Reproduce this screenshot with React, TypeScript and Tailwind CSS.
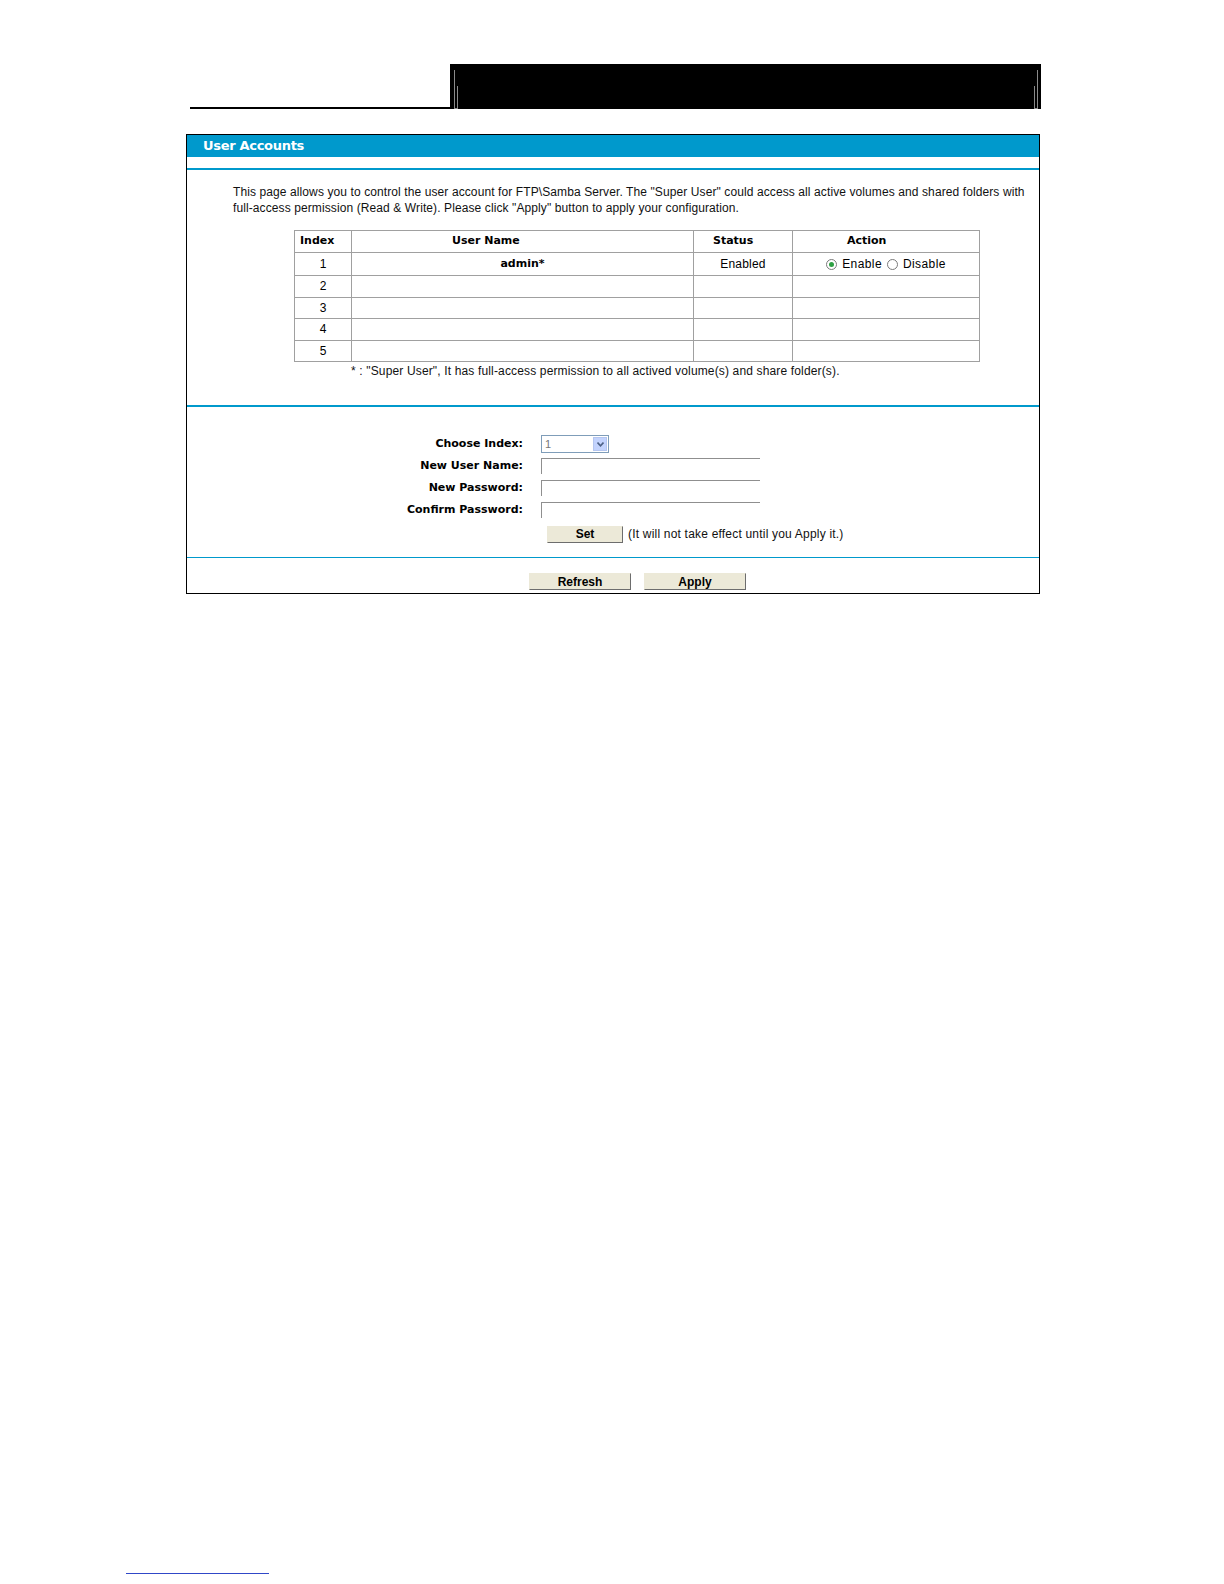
const ROWS = [
  { index: 1, name: "admin*", status: "Enabled", action: true },
  { index: 2, name: "", status: "", action: false },
  { index: 3, name: "", status: "", action: false },
  { index: 4, name: "", status: "", action: false },
  { index: 5, name: "", status: "", action: false },
];

function Radio({ checked }: { checked: boolean }) {
  return (
    <span className="inline-flex w-[11px] h-[11px] rounded-full border border-[#7a7a7a] bg-white items-center justify-center">
      {checked && <span className="w-[5px] h-[5px] rounded-full bg-[#2ea043]" />}
    </span>
  );
}

function FormButton({ label, className }: { label: string; className: string }) {
  return (
    <button
      className={
        "h-[17px] bg-[#ece9d8] border border-[#ece9d8] border-r-[#6d6d6d] border-b-[#6d6d6d] text-[12px] font-bold text-black leading-none " +
        className
      }
    >
      {label}
    </button>
  );
}

function TextField() {
  return <div className="w-[219px] h-[16px] border-t border-l border-[#8f8f8f] bg-white" />;
}

const th = "border border-[#a0a0a0] text-left font-bold text-[11px] font-['DejaVu_Sans',Verdana,sans-serif]";
const label = "h-[22px] flex items-center justify-end font-bold font-['DejaVu_Sans',Verdana,sans-serif]";

export default function App() {
  return (
    <div className="min-h-[1584px] bg-white font-['Liberation_Sans',Arial,sans-serif] text-black">
      {/* page header */}
      <div className="flex items-end pt-[64px] pl-[190px]">
        <div className="w-[260px] h-[45px] border-b-2 border-black" />
        <div className="w-[591px] h-[45px] bg-black">
          <svg width="591" height="45" viewBox="0 0 591 45">
            <path d="M4.5 6 V44 M7.5 22 V44 M4 44.5 H8" stroke="#8a8a8a" strokeWidth="1" fill="none" />
            <path d="M587.5 6 V44 M584.5 22 V44 M584 44.5 H588" stroke="#8a8a8a" strokeWidth="1" fill="none" />
          </svg>
        </div>
      </div>

      {/* User Accounts panel */}
      <div className="ml-[186px] mt-[25px] w-[854px] border border-black">
        <div className="h-[22px] bg-[#0099cc] flex items-center pl-[16px]">
          <span className="text-white text-[13px] font-bold font-['DejaVu_Sans',Verdana,sans-serif] tracking-[-0.3px]">
            User Accounts
          </span>
        </div>
        <div className="h-[11px]" />
        <div className="h-[2px] bg-[#0099cc]" />

        <div className="pt-[14px] pb-[26px]">
          <p className="pl-[46px] pr-[14px] text-[12px] leading-[16px] tracking-[0.1px] text-[#111]">
            This page allows you to control the user account for FTP\Samba Server. The "Super User" could access all active volumes and shared folders with full-access permission (Read &amp; Write). Please click "Apply" button to apply your configuration.
          </p>

          <table className="ml-[107px] mt-[14px] w-[686px] border-collapse text-[12px]">
            <thead>
              <tr className="h-[22px]">
                <th className={th + " w-[57px] pl-[5px]"}>Index</th>
                <th className={th + " w-[342px] pl-[100px]"}>User Name</th>
                <th className={th + " w-[99px] pl-[19px]"}>Status</th>
                <th className={th + " pl-[54px]"}>Action</th>
              </tr>
            </thead>
            <tbody>
              {ROWS.map((r) => (
                <tr key={r.index} className={r.index === 1 ? "h-[23px]" : "h-[21.5px]"}>
                  <td className="border border-[#a0a0a0] text-center">{r.index}</td>
                  <td className="border border-[#a0a0a0] text-center font-bold text-[11px] font-['DejaVu_Sans',Verdana,sans-serif]">{r.name}</td>
                  <td className="border border-[#a0a0a0] text-center tracking-[0.2px]">{r.status}</td>
                  <td className="border border-[#a0a0a0]">
                    {r.action && (
                      <div className="flex items-center justify-center gap-[5px] tracking-[0.4px]">
                        <Radio checked />
                        <span>Enable</span>
                        <Radio checked={false} />
                        <span>Disable</span>
                      </div>
                    )}
                  </td>
                </tr>
              ))}
            </tbody>
          </table>

          <p className="pl-[164px] mt-[1px] text-[12px] leading-[16px] tracking-[0.15px] text-[#111]">
            * : "Super User", It has full-access permission to all actived volume(s) and share folder(s).
          </p>
        </div>

        <div className="h-[2px] bg-[#0099cc]" />

        <div className="grid grid-cols-[336px_1fr] gap-x-[18px] pt-[26px] pb-[10px] text-[11px]">
          <label className={label}>Choose Index:</label>
          <div className="h-[22px] flex items-center">
            <div className="w-[68px] h-[18px] border border-[#7f9db9] bg-white flex items-center justify-between pl-[3px] pr-[1px]">
              <span className="text-[11px] text-[#777]">1</span>
              <span className="w-[14px] h-[14px] bg-[#c3d3fd] border border-[#b5c6f0] flex items-center justify-center">
                <svg width="7" height="5" viewBox="0 0 7 5">
                  <path d="M0.5 0.5 L3.5 3.8 L6.5 0.5" stroke="#4d6185" strokeWidth="1.6" fill="none" />
                </svg>
              </span>
            </div>
          </div>

          <label className={label}>New User Name:</label>
          <div className="h-[22px] flex items-center"><TextField /></div>

          <label className={label}>New Password:</label>
          <div className="h-[22px] flex items-center"><TextField /></div>

          <label className={label}>Confirm Password:</label>
          <div className="h-[22px] flex items-center"><TextField /></div>

          <div />
          <div className="h-[26px] flex items-center pl-[6px] gap-[5px]">
            <FormButton label="Set" className="w-[76px]" />
            <span className="text-[12px] tracking-[0.2px] text-[#111]">(It will not take effect until you Apply it.)</span>
          </div>
        </div>

        <div className="h-[1px] bg-[#0099cc]" />

        <div className="flex justify-center gap-[13px] pt-[15px] pb-[3px] pl-[49px]">
          <FormButton label="Refresh" className="w-[102px]" />
          <FormButton label="Apply" className="w-[102px]" />
        </div>
      </div>

      {/* page footer link underline */}
      <div className="mt-[979px] ml-[126px] w-[143px] h-[1px] bg-[#3048c8]" />
    </div>
  );
}
